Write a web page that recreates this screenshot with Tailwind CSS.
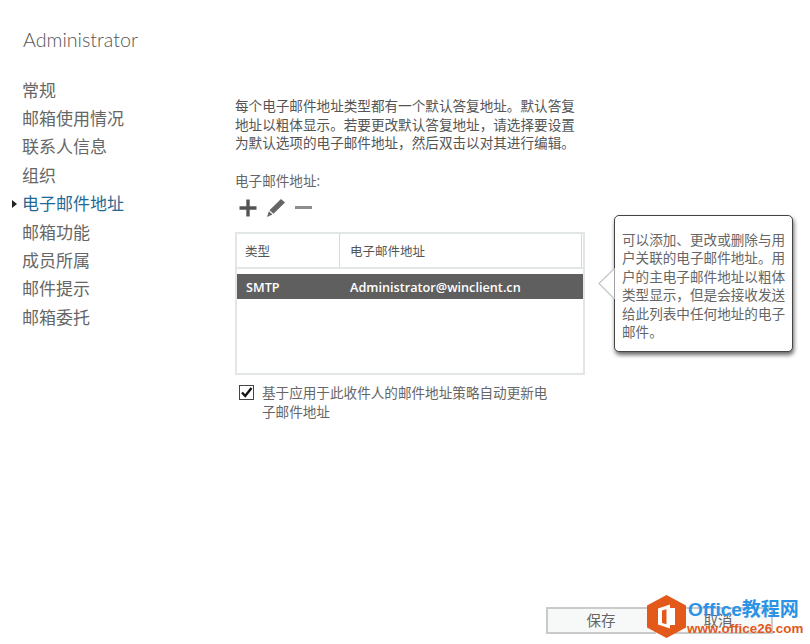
<!DOCTYPE html>
<html lang="zh-CN">
<head>
<meta charset="utf-8">
<script src="https://cdn.jsdelivr.net/npm/@tailwindcss/browser@4"></script>
<title>Administrator</title>
</head>
<body class="bg-white">
<div class="relative w-[810px] h-[644px] overflow-hidden bg-white text-[#555] font-['Open_Sans','Noto_Sans_CJK_SC',sans-serif] flex">
  <aside class="w-[235px] shrink-0 pl-[23px] pt-[26px]">
    <h1 class="font-['Lato','Noto_Sans_CJK_SC',sans-serif] text-[19.7px] leading-[28px] font-light text-[#555]">Administrator</h1>
    <nav class="relative mt-[22.5px] -ml-px text-[17px] leading-[28.4px] text-[#666]">
      <div>常规</div>
      <div>邮箱使用情况</div>
      <div>联系人信息</div>
      <div>组织</div>
      <div class="relative text-[#1f6a94]"><span class="absolute left-[-10px] top-[10px] w-0 h-0 border-y-[4px] border-y-transparent border-l-[5px] border-l-[#222]"></span>电子邮件地址</div>
      <div>邮箱功能</div>
      <div>成员所属</div>
      <div>邮件提示</div>
      <div>邮箱委托</div>
    </nav>
  </aside>
  <main class="w-[350px] pt-[97px] flex flex-col">
    <p class="text-[13.6px] leading-[18.7px] w-[350px] text-[#555]">每个电子邮件地址类型都有一个默认答复地址。默认答复<br>地址以粗体显示。若要更改默认答复地址，请选择要设置<br>为默认选项的电子邮件地址，然后双击以对其进行编辑。</p>
    <div class="mt-[19px] text-[13.6px] leading-[18px] text-[#666]">电子邮件地址:</div>
    <div class="mt-[8px] h-[20px] flex items-center gap-[9px] pl-[4px]">
      <svg width="18" height="18" viewBox="0 0 18 18"><path d="M7.3 0.5h3.4v6.8h6.8v3.4h-6.8v6.8H7.3v-6.8H0.5V7.3h6.8z" fill="#555"/></svg>
      <svg width="20" height="20" viewBox="0 0 20 20"><path d="M15 1l4 3.6L7.5 15.8l-4-3.6zM2.8 13.2l3.7 3.3L1 19z" fill="#666"/></svg>
      <svg width="17" height="4" viewBox="0 0 17 4"><rect width="17" height="3" fill="#8a8f8f"/></svg>
    </div>
    <div class="mt-[14px] w-[350px] h-[143px] border-2 border-[#e3e6e6] flex flex-col">
      <div class="h-[35px] shrink-0 flex items-center text-[12.5px] text-[#555] border-b-2 border-[#e3e6e6] pr-px">
        <div class="w-[103px] h-full flex items-center pl-[8px] pt-[3px] border-r border-[#d5d8d8]">类型</div>
        <div class="flex-1 pl-[10px] pt-[3px] h-full flex items-center border-r border-[#d5d8d8]">电子邮件地址</div>
      </div>
      <div class="mt-[5px] h-[25px] bg-[#5f5f5f] text-white text-[12.7px] font-semibold flex items-center pt-[2px]">
        <div class="w-[104px] pl-[9px]">SMTP</div>
        <div class="pl-[9px]">Administrator@winclient.cn</div>
      </div>
    </div>
    <label class="mt-[9px] flex items-start gap-[8px] pl-[4px] text-[13.6px] leading-[18.5px] text-[#666]">
      <span class="mt-[1px] w-[15px] h-[15px] shrink-0 border border-[#444] bg-white flex items-center justify-center">
        <svg width="13" height="13" viewBox="0 0 13 13"><path d="M2 6.5l3.2 3.5L11.5 2" fill="none" stroke="#111" stroke-width="2.4"/></svg>
      </span>
      <span class="w-[290px]">基于应用于此收件人的邮件地址策略自动更新电<br>子邮件地址</span>
    </label>
  </main>

  <!-- callout -->
  <div class="absolute left-[614px] top-[215px] w-[179px] h-[137px] bg-white border border-[#444] rounded-[5px] shadow-[1px_3px_4px_rgba(0,0,0,0.6)] pl-[7px] pt-[15px] text-[13.6px] leading-[18.4px] text-[#666] whitespace-nowrap">
    可以添加、更改或删除与用<br>户关联的电子邮件地址。用<br>户的主电子邮件地址以粗体<br>类型显示，但是会接收发送<br>给此列表中任何地址的电子<br>邮件。
  </div>
  <svg class="absolute left-[598px] top-[268px]" width="17" height="32" viewBox="0 0 17 32"><path d="M16.5 0.5L1 15.5l15.5 15.5" fill="#fff" stroke="#c9cccc" stroke-width="1.5"/></svg>

  <!-- footer buttons -->
  <div class="absolute left-[546px] top-[607px] flex gap-[7px] text-[14.5px] text-[#666]">
    <button class="w-[110px] h-[27px] bg-[#f7f8f8] border-2 border-[#c9cbcb]">保存</button>
    <button class="w-[110px] h-[27px] bg-[#f7f8f8] border-2 border-[#c9cbcb]">取消</button>
  </div>

  <!-- watermark -->
  <div class="absolute left-[647px] top-[595px] flex items-start gap-[2px]">
    <svg width="39" height="43" viewBox="0 0 39 43">
      <path d="M19.5 0L39 10.5v22L19.5 43L0 32.5v-22z" fill="#e2591a"/>
      <path d="M11 13.5L23 9.5v24l-12-4zM23 13h5v17h-5" fill="#fff"/>
      <path d="M15 15.5l4.5-1.3v15L15 28z" fill="#e2591a"/>
    </svg>
    <div class="flex flex-col font-['Liberation_Sans','Noto_Sans_CJK_SC',sans-serif] font-bold">
      <div class="text-[19px] leading-[22px] mt-[4px] text-[#2a93e6] whitespace-nowrap">Office教程网</div>
      <div class="text-[13.4px] leading-[14px] mt-[1px] -ml-[1px] text-[#e2591a] whitespace-nowrap">www.office26.com</div>
    </div>
  </div>
</div>
</body>
</html>
